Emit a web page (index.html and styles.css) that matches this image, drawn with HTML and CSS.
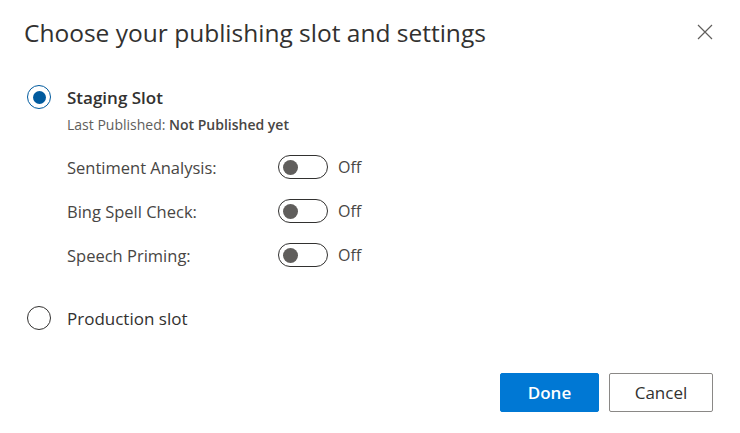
FILE: index.html
```html
<!DOCTYPE html>
<html>
<head>
<meta charset="utf-8">
<link rel="stylesheet" href="styles.css">
</head>
<body>
<div class="dialog">
  <div class="header">
    <h1 class="title">Choose your publishing slot and settings</h1>
    <button class="close" aria-label="Close">
      <svg width="16" height="16" viewBox="0 0 16 16"><path d="M1 1L15 15M15 1L1 15" stroke="#605e5c" stroke-width="1.2" fill="none"/></svg>
    </button>
  </div>
  <div class="body">
    <div class="option">
      <span class="radio checked"></span>
      <span class="option-label strong">Staging Slot</span>
    </div>
    <div class="details">
      <div class="published">Last Published: <b>Not Published yet</b></div>
      <div class="setting">
        <span class="setting-label">Sentiment Analysis:</span>
        <span class="toggle"><span class="knob"></span></span>
        <span class="state">Off</span>
      </div>
      <div class="setting">
        <span class="setting-label">Bing Spell Check:</span>
        <span class="toggle"><span class="knob"></span></span>
        <span class="state">Off</span>
      </div>
      <div class="setting">
        <span class="setting-label">Speech Priming:</span>
        <span class="toggle"><span class="knob"></span></span>
        <span class="state">Off</span>
      </div>
    </div>
    <div class="option production">
      <span class="radio"></span>
      <span class="option-label">Production slot</span>
    </div>
  </div>
  <div class="footer">
    <button class="btn primary">Done</button>
    <button class="btn">Cancel</button>
  </div>
</div>
</body>
</html>
```
FILE: styles.css
```css
* { box-sizing: border-box; }
html, body { margin: 0; padding: 0; background: #fff; }
body {
  font-family: "Open Sans", "Noto Sans", sans-serif;
  color: #323130;
  width: 740px;
  height: 433px;
  overflow: hidden;
}
.dialog { padding: 0 24px; }
.header {
  display: flex;
  justify-content: space-between;
  align-items: flex-start;
  padding-top: 16px;
}
.title {
  margin: 0;
  font-size: 24.5px;
  font-weight: 400;
  line-height: 34px;
  color: #323130;
}
.close {
  border: 0;
  background: none;
  padding: 0;
  margin: 8px 3px 0 0;
  width: 16px;
  height: 16px;
  display: flex;
}
.body { padding-top: 30px; }
.option {
  display: flex;
  align-items: center;
  gap: 16px;
  height: 34px;
  padding-left: 3px;
}
.radio {
  width: 24px;
  height: 24px;
  border-radius: 50%;
  border: 1.5px solid #323130;
  display: flex;
  align-items: center;
  justify-content: center;
  flex: none;
}
.radio.checked { border-color: #005a9e; }
.radio.checked::after {
  content: "";
  width: 13px;
  height: 13px;
  border-radius: 50%;
  background: #005a9e;
}
.option-label { font-size: 17px; color: #323130; }
.option-label.strong { font-weight: 600; }
.details { padding-left: 43px; }
.published {
  font-size: 14px;
  color: #605e5c;
  margin-top: 2px;
  line-height: 18px;
}
.published b { font-weight: 600; color: #484644; }
.setting {
  display: flex;
  align-items: center;
  height: 44px;
}
.published + .setting { margin-top: 11px; }
.setting-label {
  width: 211px;
  font-size: 16.5px;
  color: #484644;
}
.toggle {
  width: 50px;
  height: 24px;
  border: 1.3px solid #323130;
  border-radius: 12px;
  display: flex;
  align-items: center;
  padding-left: 4px;
  flex: none;
}
.knob {
  width: 15px;
  height: 15px;
  border-radius: 50%;
  background: #605e5c;
}
.state {
  margin-left: 10px;
  font-size: 16px;
  color: #484644;
}
.production { margin-top: 24px; }
.footer {
  display: flex;
  justify-content: flex-end;
  gap: 10px;
  margin-top: 38px;
  padding-right: 3px;
}
.btn {
  height: 39px;
  font-family: inherit;
  font-size: 17px;
  border-radius: 2px;
  border: 1px solid #8a8886;
  background: #fff;
  color: #323130;
  width: 104px;
  padding: 0;
}
.btn.primary {
  width: 99px;
  background: #0078d4;
  border-color: #0078d4;
  color: #fff;
  font-weight: 600;
}
```
